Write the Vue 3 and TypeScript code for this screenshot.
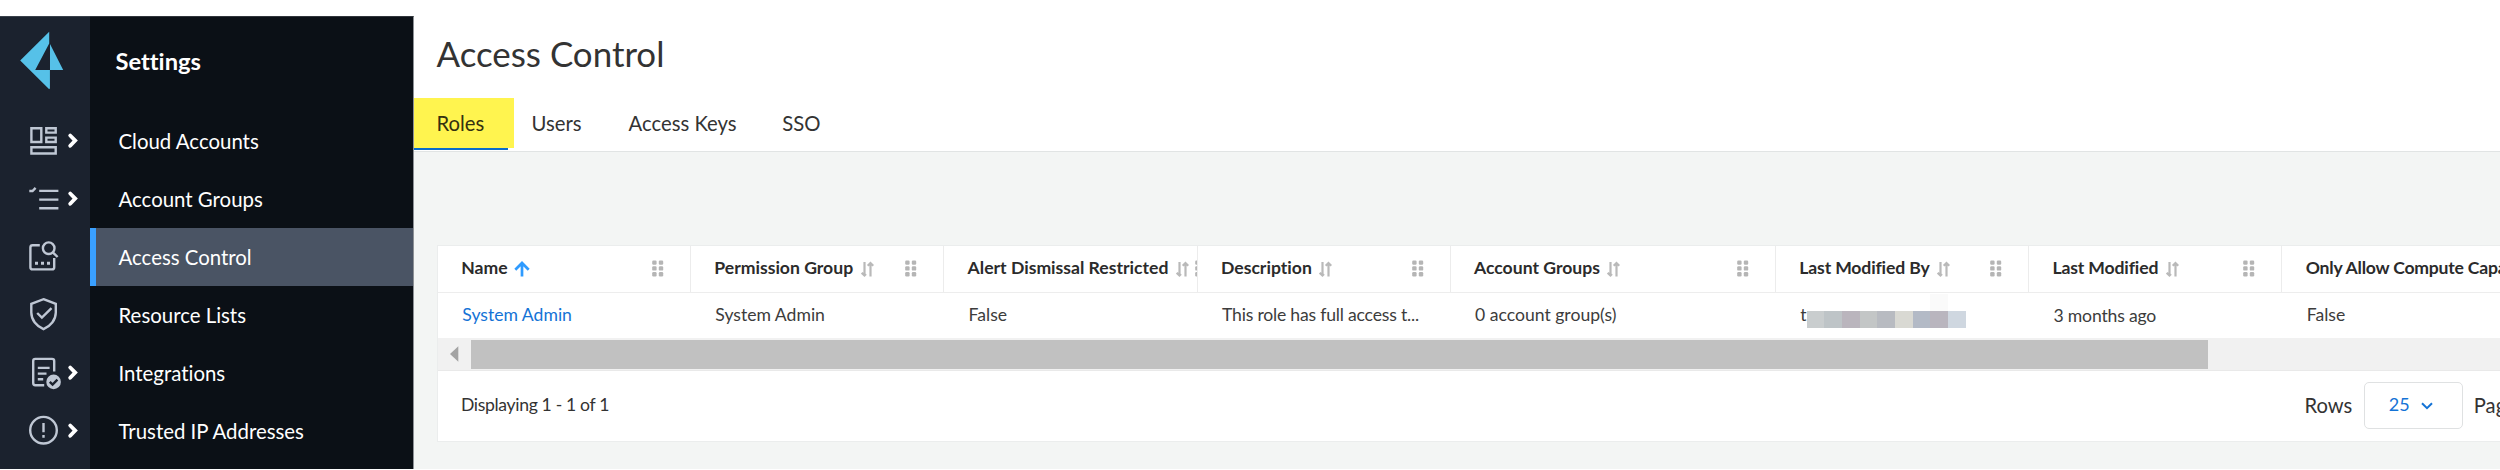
<script setup lang="ts">
interface Column {
  title: string
  value: string
  width: number
  sort: 'asc' | 'none'
  kind?: 'link' | 'masked'
}

interface NavItem {
  label: string
  active?: boolean
}

const nav: NavItem[] = [
  { label: 'Cloud Accounts' },
  { label: 'Account Groups' },
  { label: 'Access Control', active: true },
  { label: 'Resource Lists' },
  { label: 'Integrations' },
  { label: 'Trusted IP Addresses' },
]

const tabs = ['Roles', 'Users', 'Access Keys', 'SSO']

const columns: Column[] = [
  { title: 'Name', value: 'System Admin', width: 253, sort: 'asc', kind: 'link' },
  { title: 'Permission Group', value: 'System Admin', width: 253.3, sort: 'none' },
  { title: 'Alert Dismissal Restricted', value: 'False', width: 253.4, sort: 'none' },
  { title: 'Description', value: 'This role has full access t...', width: 253, sort: 'none' },
  { title: 'Account Groups', value: '0 account group(s)', width: 325.3, sort: 'none' },
  { title: 'Last Modified By', value: 't', width: 253.2, sort: 'none', kind: 'masked' },
  { title: 'Last Modified', value: '3 months ago', width: 253.3, sort: 'none' },
  { title: 'Only Allow Compute Capabilities', value: 'False', width: 360, sort: 'none' },
]

const mask = ['#c9cdce', '#bec4c7', '#bab5bd', '#c3c6c6', '#b8bbc1', '#d9d9d3', '#b3bac6', '#b9b5be', '#cfd7e0']
</script>

<template>
  <div class="app">
    <aside class="rail">
      <div class="logo">
        <svg width="90" height="96" viewBox="0 16 90 96">
          <path fill="#56c1e8" d="M20.2 60.5 49.2 31.8V43.5L35.2 70H49.2V89.2Z" />
          <path fill="#56c1e8" d="M50 44 63.2 70H50ZM49 70h.9v19l-.9-.6Z" />
        </svg>
      </div>
      <div class="rail-item">
        <svg viewBox="0 0 90 58" class="icon">
          <path d="M31.4 17.2H41.3V31H31.4ZM46.3 17.2H55.7V21.6H46.3ZM46.3 26.6H55.7V31H46.3ZM31.4 36.3H55.7V42.5H31.4Z" />
          <path class="chev" d="M70.2 24.5 75.2 29.6 70.2 34.8" />
        </svg>
      </div>
      <div class="rail-item">
        <svg viewBox="0 0 90 58" class="icon">
          <path d="M29.3 22H32.5L35.6 18.8M39.2 21.9H58.4M39.2 30.6H58.4M39.2 39.2H58.4" />
          <path class="chev" d="M70.2 24.5 75.2 29.6 70.2 34.8" />
        </svg>
      </div>
      <div class="rail-item">
        <svg viewBox="0 0 90 58" class="icon">
          <path d="M39.8 18.3H32.6Q30.4 18.3 30.4 20.5V40.2Q30.4 42.4 32.6 42.4H52Q54.2 42.4 54.2 40.2V31" />
          <circle cx="48.7" cy="21.2" r="5.8" />
          <path d="M52.8 25.4 57.6 30" />
          <path class="solid" d="M35 34.8h3v3h-3zM41 34.8h3v3h-3zM47 34.8h3v3h-3z" />
        </svg>
      </div>
      <div class="rail-item">
        <svg viewBox="0 0 90 58" class="icon">
          <path d="M43.5 14.2 55.8 18.8V27.5C55.8 35 50.5 41.2 43.5 44.2 36.5 41.2 31.3 35 31.3 27.5V18.8Z" />
          <path d="M37.2 28 41.9 32.6 51.5 23.2" />
        </svg>
      </div>
      <div class="rail-item">
        <svg viewBox="0 0 90 58" class="icon">
          <path d="M44.2 42.2H35.3Q33.2 42.2 33.2 40V18Q33.2 15.9 35.3 15.9H52Q54.2 15.9 54.2 18V28.5" />
          <path d="M37.8 24.9H49.6M37.8 30.6H46.5M37.8 36.3H43.2" />
          <circle class="solid" cx="53.6" cy="38.9" r="7.3" />
          <path class="dark" d="M49.8 38.8 52.6 41.5 57.4 36.7" />
          <path class="chev" d="M70.2 24.5 75.2 29.6 70.2 34.8" />
        </svg>
      </div>
      <div class="rail-item">
        <svg viewBox="0 0 90 58" class="icon">
          <circle cx="43.5" cy="29.2" r="13.3" />
          <path d="M43.5 22.1V31.3M43.5 34V36.8" />
          <path class="chev" d="M70.2 24.5 75.2 29.6 70.2 34.8" />
        </svg>
      </div>
    </aside>

    <nav class="sidebar">
      <h2>Settings</h2>
      <a v-for="item in nav" :key="item.label" class="nav-item" :class="{ active: item.active }">{{ item.label }}</a>
    </nav>

    <main class="main">
      <header class="head">
        <h1>Access Control</h1>
        <div class="tabs">
          <a v-for="(tab, i) in tabs" :key="tab" class="tab" :class="{ current: i === 0 }"><span>{{ tab }}</span></a>
        </div>
      </header>

      <section class="card">
        <div class="row header-row">
          <div v-for="col in columns" :key="col.title" class="th" :style="{ width: col.width + 'px' }">
            <span>{{ col.title }}</span>
            <svg v-if="col.sort === 'asc'" class="sort-asc" width="16" height="16" viewBox="0 0 16 16">
              <path d="M8 15.5V2.5M1.3 8.7 8 2 14.7 8.7" />
            </svg>
            <svg v-else class="sort" width="13" height="16" viewBox="0 0 13 16">
              <path d="M3.5 1V14M.7 11.8 3.5 14.4 5 13M9.5 15.5V2.5M6.7 4.8 9.5 2 12.3 4.8" />
            </svg>
            <svg class="grip" width="12" height="17" viewBox="0 0 12 17">
              <template v-for="y in [0.5, 6.3, 12.1]" :key="y">
                <rect x="0.2" :y="y" width="4.4" height="4.3" rx="1.2" />
                <rect x="6.8" :y="y" width="4.4" height="4.3" rx="1.2" />
              </template>
            </svg>
          </div>
        </div>
        <div class="row body-row">
          <div v-for="col in columns" :key="col.title" class="td" :class="col.kind" :style="{ width: col.width + 'px' }">
            <span>{{ col.value }}</span>
            <div v-if="col.kind === 'masked'" class="mask">
              <i v-for="(c, i) in mask" :key="i" :style="{ background: c }"></i>
            </div>
          </div>
        </div>
        <div class="scrollbar">
          <svg width="33" height="32" viewBox="0 0 33 32"><path fill="#a3a3a3" d="M12 16 20.3 8.3V23.7Z" /></svg>
          <div class="thumb"></div>
        </div>
        <footer class="pager">
          <span class="count">Displaying 1 - 1 of 1</span>
          <div class="paging">
            <span class="rows">Rows</span>
            <button class="select">
              <span>25</span>
              <svg width="12" height="8" viewBox="0 0 12 8"><path d="M1 1.2 6 6.2 11 1.2" fill="none" stroke="#1473d6" stroke-width="2" /></svg>
            </button>
            <span class="page">Page</span>
          </div>
        </footer>
      </section>
    </main>
  </div>
</template>

<style>
body {
  margin: 0;
  background: #fff;
  overflow: hidden;
}
</style>

<style scoped>
.app {
  display: flex;
  box-sizing: border-box;
  width: 2500px;
  height: 469px;
  padding-top: 16px;
  overflow: hidden;
  background: #fff;
  font-family: Lato, 'Liberation Sans', sans-serif;
  font-variant-ligatures: no-common-ligatures;
  color: #333;
}
.rail {
  flex: none;
  width: 89.5px;
  background: #1b222e;
  border-top: 1px solid #3a414b;
  box-sizing: border-box;
}
.logo {
  height: 95.4px;
}
.logo svg {
  display: block;
  margin-top: -1px;
}
.rail-item {
  height: 57.85px;
}
.icon {
  display: block;
  width: 90px;
  height: 58px;
  fill: none;
  stroke: #bfc7d4;
  stroke-width: 2.4;
}
.icon .chev {
  stroke: #fff;
  stroke-width: 3.8;
  stroke-linecap: round;
}
.icon .solid {
  fill: #bfc7d4;
  stroke: none;
}
.icon .dark {
  stroke: #1b222e;
}
.sidebar {
  flex: none;
  box-sizing: border-box;
  width: 324px;
  background: #0b1016;
  border-top: 1px solid #30353b;
  border-right: 1px solid #8d9196;
  color: #fff;
}
.sidebar h2 {
  margin: 0;
  height: 95.4px;
  padding: 0 0 0 26px;
  font-size: 23.7px;
  line-height: 88px;
}
.nav-item {
  display: block;
  box-sizing: border-box;
  height: 57.85px;
  padding-left: 29px;
  font-size: 20.4px;
  line-height: 59px;
}
.nav-item.active {
  background: #4a5464;
  border-left: 6px solid #3aa0ff;
  padding-left: 23px;
}
.main {
  flex: 1;
  min-width: 0;
  background: #f3f5f4;
  overflow: hidden;
}
.head {
  box-sizing: border-box;
  height: 136px;
  background: #fff;
  border-bottom: 1px solid #e1e4e4;
}
h1 {
  margin: 0;
  padding-left: 23px;
  font-size: 34.9px;
  font-weight: 400;
  line-height: 76px;
}
.tabs {
  display: flex;
  padding-top: 6px;
}
.tab {
  padding: 0 23.5px;
  font-size: 20.3px;
  line-height: 51px;
  height: 52px;
}
.tab:nth-child(3) {
  padding-right: 22px;
}
.tab.current {
  position: relative;
  box-sizing: border-box;
  width: 94.5px;
  padding: 0 0 0 23px;
  border-bottom: 2.5px solid #0a6ccb;
}
.tab.current::before {
  content: '';
  position: absolute;
  left: 0;
  top: 0;
  width: 100.5px;
  height: 49.5px;
  background: #fff44f;
}
.tab.current span {
  position: relative;
  color: #33310f;
}
.card {
  box-sizing: border-box;
  width: 2200px;
  height: 197px;
  margin: 92.5px 0 0 23.5px;
  background: #fff;
  border: 1px solid #ebeded;
}
.row {
  display: flex;
  box-sizing: border-box;
}
.header-row {
  height: 47px;
  border-bottom: 1px solid #ededed;
}
.th {
  flex: none;
  display: flex;
  align-items: center;
  box-sizing: border-box;
  padding: 0 26px 0 23.3px;
  border-right: 1px solid #ececec;
  overflow: hidden;
  white-space: nowrap;
  font-size: 17.6px;
  font-weight: 700;
  color: #2b2b2b;
}
.th > span {
  flex: none;
  line-height: 44px;
  height: 46px;
}
.th:nth-child(n + 6) > span {
  letter-spacing: -0.15px;
}
.th:nth-child(8) > span {
  letter-spacing: -0.22px;
}
.th svg {
  flex: none;
  fill: none;
}
.sort-asc {
  margin-left: 6.5px;
  stroke: #2f9bff;
  stroke-width: 2.7;
}
.sort {
  margin-left: 7.5px;
  stroke: #b9b9b9;
  stroke-width: 2.2;
}
.th .grip {
  margin-left: auto;
  fill: #b5b5b5;
}
.th:nth-child(3) .grip {
  margin-left: 6px;
}
.body-row {
  height: 45.5px;
}
.td {
  flex: none;
  box-sizing: border-box;
  padding-left: 24.3px;
  font-size: 17.6px;
  line-height: 43px;
  white-space: nowrap;
  color: #3c3c3c;
}
.td:nth-child(4) {
  letter-spacing: -0.2px;
}
.td:nth-child(7) {
  letter-spacing: -0.18px;
  line-height: 45px;
}
.td.link {
  color: #1473d6;
}
.td.masked {
  display: flex;
}
.mask {
  display: flex;
  height: 17px;
  margin-top: 18px;
}
.mask i {
  width: 17.7px;
}
.mask i:nth-child(8) {
  box-shadow: 0 -17px 0 #fafafa;
}
.scrollbar {
  display: flex;
  box-sizing: border-box;
  height: 32.5px;
  background: #f1f1f1;
  border-bottom: 1px solid #e9e9e9;
}
.thumb {
  width: 1737px;
  height: 29px;
  margin-top: 1.5px;
  background: #c1c1c1;
}
.pager {
  display: flex;
  height: 69px;
}
.count {
  width: 1843.5px;
  padding-left: 23px;
  font-size: 17.6px;
  line-height: 68.5px;
  letter-spacing: -0.34px;
}
.paging {
  display: flex;
  align-items: center;
  font-size: 20.2px;
  line-height: 69px;
}
.select {
  display: flex;
  align-items: center;
  box-sizing: border-box;
  width: 99px;
  height: 47px;
  margin: 0 11px 0 11.5px;
  padding: 0 0 2px 24px;
  background: #fff;
  border: 1px solid #dfe1e2;
  border-radius: 5px;
  font-family: inherit;
  font-size: 18px;
  color: #1473d6;
}
.select svg {
  margin: 3px 0 0 11px;
}
</style>
